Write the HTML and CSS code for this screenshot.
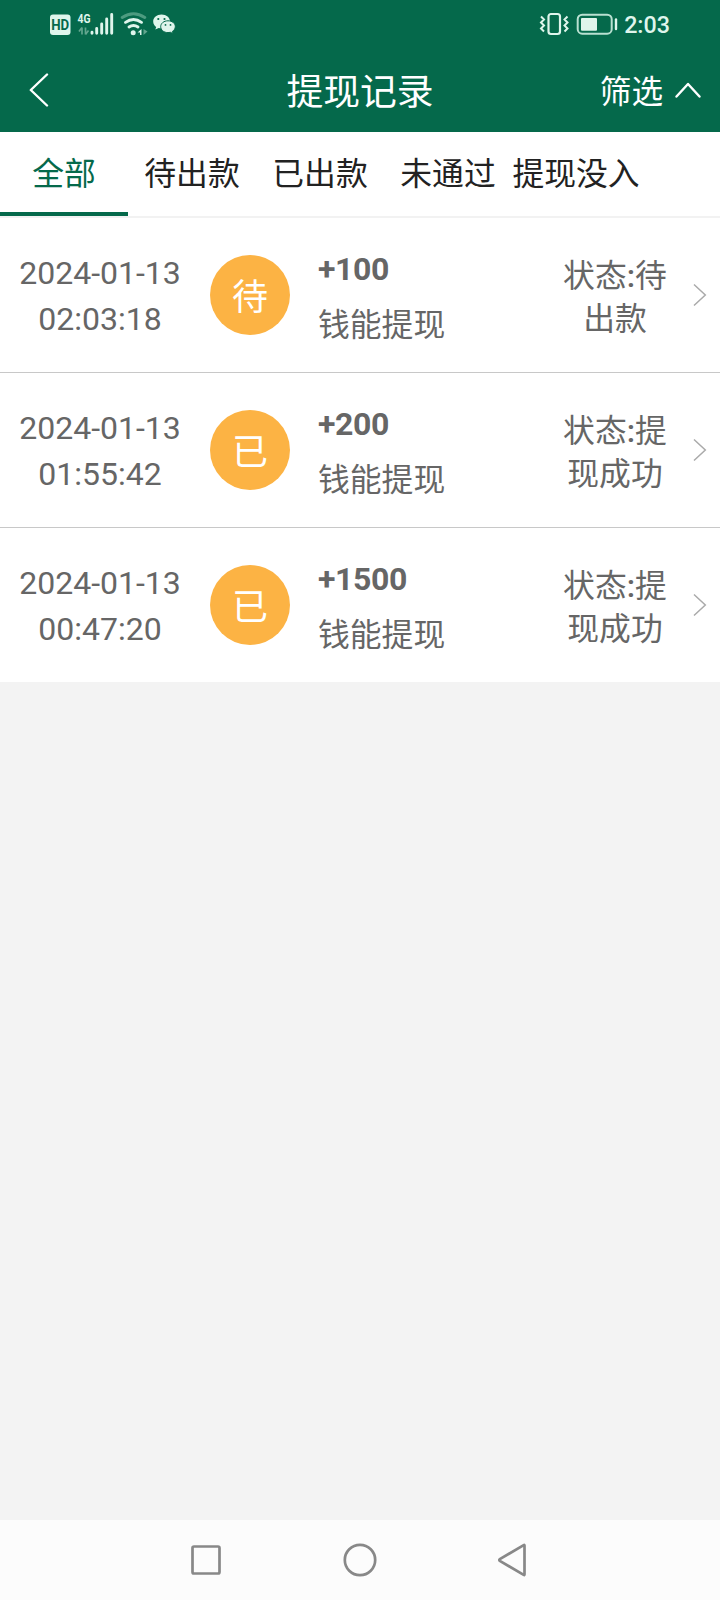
FILE: index.html
```
<!DOCTYPE html>
<html lang="zh-CN">
<head>
<meta charset="utf-8">
<title>提现记录</title>
<link rel="stylesheet" href="styles.css">
</head>
<body>
<div class="screen">
  <header class="header">
    <div class="status-bar">
      <svg class="status-left" width="130" height="30" viewBox="0 0 130 30">
        <rect x="0" y="5.500" width="20.5" height="20.500" rx="3" fill="#dff5ec"/>
        <text x="10.2" y="20.6" class="hd" text-anchor="middle" textLength="18" lengthAdjust="spacingAndGlyphs">HD</text>
        <text x="27.500" y="13.8" class="net" textLength="13" lengthAdjust="spacingAndGlyphs">4G</text>
        <path d="M32 18.500v7M32 18.500l-3 4M35.500 18.500v7M35.500 25.500l3-4" stroke="#62a58e" stroke-width="1.700" fill="none"/>
        <path d="M42 23.200v1.100M46.700 19.500v4.800M51.700 15v9.300M56.700 10v14.300M61.700 5.500v18.800" stroke="#dff5ec" stroke-width="2.900" stroke-linecap="round"/>
        <g fill="none" stroke-width="2.900" stroke-linecap="round">
          <path d="M72.200 8.500Q83.500.800 94.800 8.500" stroke="#4d9b80"/>
          <path d="M75.500 13.300Q83.500 7.500 91.500 13.300M79 18Q83.500 14.800 88 18" stroke="#dff5ec"/>
        </g>
        <circle cx="83.200" cy="23.700" r="2.500" fill="#dff5ec"/>
        <path d="M91.500 20v6h-1.500v-2.500h-2.500z" fill="#dff5ec"/>
        <path d="M93.500 20v6l4-3.500z" fill="#62a58e"/>
        <path d="M111.500 5.500c-4.700 0-8.300 3.100-8.300 7 0 2.300 1.200 4.200 3 5.500l-.9 2.600 3.400-1.600c4.800 1.400 11.300-1.100 11.300-6.500 0-3.900-3.600-7-8.500-7z" fill="#dff5ec"/>
        <path d="M118 11.800c-4.200 0-7.300 2.600-7.300 5.900s3.100 5.900 7.300 5.900c.9 0 1.700-.1 2.500-.3l2.600 1.400-.7-2.300c1.800-1.200 2.900-2.800 2.900-4.700 0-3.300-3.100-5.900-7.300-5.900z" fill="#dff5ec" stroke="#05694b" stroke-width="1"/>
        <g fill="#05694b"><circle cx="108.300" cy="10" r="1.100"/><circle cx="114.500" cy="10" r="1.100"/><circle cx="115.500" cy="15.900" r=".9"/><circle cx="120.500" cy="15.900" r=".9"/></g>
      </svg>
      <div class="status-right">
        <svg width="80" height="30" viewBox="0 0 80 30" fill="none" stroke="#dff5ec">
          <rect x="9.500" y="5" width="11.500" height="20" rx="2.500" stroke-width="2.200"/>
          <path d="M2 7.500l3 3-3 3 3 3-3 3 3 3M28.500 7.500l-3 3 3 3-3 3 3 3-3 3" stroke-width="2"/>
          <rect x="38.700" y="5.700" width="34" height="19" rx="4.500" stroke="#b9e0d1" stroke-width="2"/>
          <rect x="42" y="9" width="16" height="12.700" rx="1" fill="#dff5ec" stroke="none"/>
          <path d="M77 10.500v9.500" stroke-width="2.400" stroke-linecap="round"/>
        </svg>
        <span class="clock">2:03</span>
      </div>
    </div>
    <div class="title-bar">
      <svg class="back" width="20" height="34" viewBox="0 0 20 34"><path d="M18 1.500L1.800 17 18 32.500"/></svg>
      <h1 class="title">提现记录</h1>
      <div class="filter"><span>筛选</span><svg width="26" height="16" viewBox="0 0 26 16"><path d="M1.500 14.500L13 2l11.500 12.500"/></svg></div>
    </div>
  </header>
  <nav class="tabs">
    <a class="tab active">全部</a><a class="tab">待出款</a><a class="tab">已出款</a><a class="tab">未通过</a><a class="tab">提现没入</a>
  </nav>
  <main class="list">
    <div class="row">
      <div class="date">2024-01-13<br>02:03:18</div>
      <div class="badge">待</div>
      <div class="info"><b class="amount">+100</b><span>钱能提现</span></div>
      <div class="state">状态<span class="colon">:</span>待<br>出款</div>
      <svg class="arrow" width="14" height="24" viewBox="0 0 14 24"><path d="M1 1.500L12.300 12 1 22.500"/></svg>
    </div>
    <div class="row">
      <div class="date">2024-01-13<br>01:55:42</div>
      <div class="badge">已</div>
      <div class="info"><b class="amount">+200</b><span>钱能提现</span></div>
      <div class="state">状态<span class="colon">:</span>提<br>现成功</div>
      <svg class="arrow" width="14" height="24" viewBox="0 0 14 24"><path d="M1 1.500L12.300 12 1 22.500"/></svg>
    </div>
    <div class="row">
      <div class="date">2024-01-13<br>00:47:20</div>
      <div class="badge">已</div>
      <div class="info"><b class="amount">+1500</b><span>钱能提现</span></div>
      <div class="state">状态<span class="colon">:</span>提<br>现成功</div>
      <svg class="arrow" width="14" height="24" viewBox="0 0 14 24"><path d="M1 1.500L12.300 12 1 22.500"/></svg>
    </div>
  </main>
  <footer class="navbar">
    <svg width="40" height="40" viewBox="0 0 40 40"><rect x="6.500" y="6.500" width="27" height="27" rx="1.500"/></svg>
    <svg width="40" height="40" viewBox="0 0 40 40"><circle cx="20" cy="20" r="15.200"/></svg>
    <svg width="40" height="40" viewBox="0 0 40 40"><path d="M30.500 5.500v29q0 .8-.8.400L5.800 20.800q-1.100-.8 0-1.600L29.700 5.100q.8-.4.8.4z"/></svg>
  </footer>
</div>
</body>
</html>
```

FILE: styles.css
```
* { box-sizing: border-box; }
body {
  margin: 0;
  font-family: Roboto, "Noto Sans CJK SC", sans-serif;
  font-size: 32px;
  color: #666;
}
svg { display: block; flex: none; }
.screen { display: flex; flex-direction: column; width: 720px; height: 1600px; background: #f3f3f3; }
.header { height: 132px; background: #05694b; color: #fff; }
.status-bar { height: 50px; display: flex; justify-content: space-between; padding: 9px 50px 0; }
.status-right { display: flex; gap: 5px; }
.clock { font-size: 23.3px; line-height: 33px; font-weight: 500; color: #dff5ec; }
.hd { font: bold 14.5px Roboto, sans-serif; fill: #05694b; }
.net { font: bold 13px Roboto, sans-serif; fill: #dff5ec; }
.title-bar { height: 82px; display: grid; grid-template-columns: 200px 1fr 200px; align-items: center; padding: 0 19px 0 29px; }
.back path, .filter path { fill: none; stroke: #fff; stroke-width: 2.4; stroke-linecap: round; stroke-linejoin: round; }
.back { margin-bottom: 2px; }
.title { margin: 0; padding: 4px 10px 0 0; font-size: 36.8px; line-height: 78px; font-weight: 400; text-align: center; }
.filter { display: flex; align-items: center; justify-content: flex-end; gap: 12px; line-height: 78px; }
.filter svg { margin-bottom: 2px; }
.filter span { font-size: 31.6px; padding-top: 3px; }
.tabs { display: flex; height: 86px; background: #fff; border-bottom: 2px solid #f2f2f2; }
.tab { width: 128px; height: 84px; text-align: center; font-size: 31.8px; line-height: 84px; color: #222; white-space: nowrap; }
.tab.active { color: #05694b; border-bottom: 4px solid #05694b; }
.list { background: #fff; }
.row { display: grid; grid-template-columns: 200px 100px 1fr 160px 26px; align-items: center; height: 155px; border-bottom: 1px solid #c8c8c8; }
.row:last-child { height: 154px; border-bottom: 0; }
.date { text-align: center; line-height: 46px; padding-top: 1px; }
.badge { width: 80px; height: 80px; margin-left: 10px; border-radius: 50%; background: #fcb344; color: #fff; font-size: 36px; line-height: 86px; text-align: center; }
.info { display: flex; flex-direction: column; padding: 3px 0 0 18px; line-height: 56px; }
.info span { font-size: 31.8px; }
.amount { letter-spacing: -0.4px; }
.state { text-align: center; line-height: 43px; padding: 6px 0 0 2px; font-size: 31.8px; }
.colon { font-weight: 500; }
.arrow { margin-left: -1px; }
.arrow path { fill: none; stroke: #aaa; stroke-width: 1.5; }
.navbar { margin-top: auto; height: 80px; background: #fcfcfc; display: flex; align-items: center; justify-content: center; gap: 114px; }
.navbar svg { fill: none; stroke: #888; stroke-width: 2.7; stroke-linejoin: round; }
```
